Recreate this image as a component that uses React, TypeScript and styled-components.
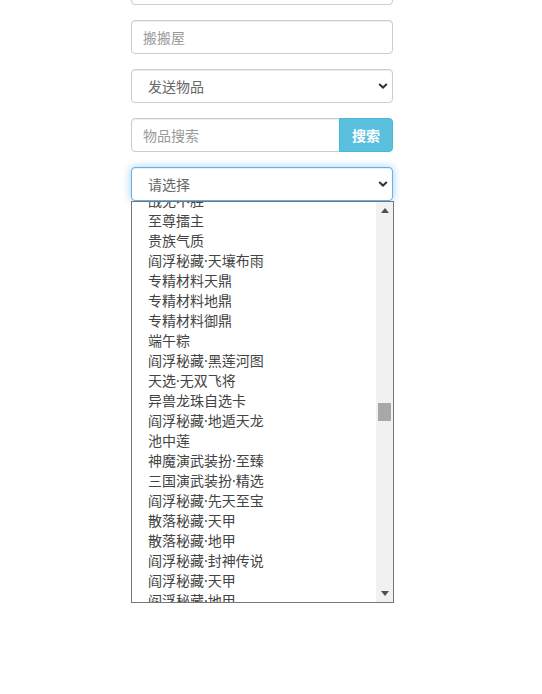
import React from "react";
import styled, { createGlobalStyle } from "styled-components";

const Global = createGlobalStyle`
  html, body { margin: 0; padding: 0; background: #fff; overflow: hidden; }
  body { font-family: "Noto Sans", "Noto Sans CJK SC", sans-serif; font-size: 14px; color: #333; }
  * { box-sizing: border-box; }
`;

const Page = styled.div`
  width: 542px;
  height: 694px;
  overflow: hidden;
`;

const Form = styled.div`
  width: 262px;
  margin-left: 131px;
  margin-top: -29px;
  display: flex;
  flex-direction: column;
  gap: 15px;
`;

const Input = styled.div<{ $placeholder?: boolean }>`
  height: 34px;
  border: 1px solid #ccc;
  border-radius: 4px;
  padding: 0 11px;
  display: flex;
  align-items: center;
  font-size: 14px;
  color: ${(p) => (p.$placeholder ? "#999" : "#555")};
  background: #fff;
  box-shadow: inset 0 1px 1px rgba(0, 0, 0, 0.075);
`;

const Select = styled.div<{ $focus?: boolean }>`
  height: 34px;
  border: 1px solid ${(p) => (p.$focus ? "#66afe9" : "#ccc")};
  border-radius: 4px;
  padding: 0 4px 0 16px;
  display: flex;
  align-items: center;
  justify-content: space-between;
  font-size: 14px;
  color: #666;
  background: #fff;
  box-shadow: ${(p) =>
    p.$focus
      ? "inset 0 1px 1px rgba(0,0,0,.075), 0 0 8px rgba(102,175,233,.6)"
      : "inset 0 1px 1px rgba(0,0,0,.075)"};
`;

const Group = styled.div`
  display: flex;
  height: 34px;
`;

const GroupInput = styled(Input)`
  flex: 1;
  border-radius: 4px 0 0 4px;
`;

const Button = styled.div`
  width: 54px;
  border: 1px solid #46b8da;
  background: #5bc0de;
  color: #fff;
  border-radius: 0 4px 4px 0;
  display: flex;
  align-items: center;
  justify-content: center;
  font-size: 14px;
  font-weight: 600;
  margin-left: -1px;
`;

const SelectWrap = styled.div`
  position: relative;
`;

const ListBox = styled.div`
  position: absolute;
  top: 34px;
  left: 0;
  width: 263px;
  height: 402px;
  border: 1px solid #767676;
  background: #fff;
  display: flex;
`;

const Options = styled.div`
  flex: 1;
  overflow: hidden;
`;

const OptionsInner = styled.div`
  margin-top: -11px;
`;

const Option = styled.div`
  height: 20px;
  line-height: 20px;
  padding-left: 16px;
  font-size: 14px;
  color: #444;
  white-space: nowrap;
`;

const ScrollBar = styled.div`
  width: 17px;
  background: #f1f1f1;
  position: relative;
  display: flex;
  flex-direction: column;
  align-items: center;
  justify-content: space-between;
`;

const Arrow = styled.div`
  height: 17px;
  width: 17px;
  display: flex;
  align-items: center;
  justify-content: center;
`;

const Thumb = styled.div`
  position: absolute;
  left: 2px;
  width: 13px;
  top: 201px;
  height: 18px;
  background: #a8a8a8;
`;

const items = [
  "战无不胜",
  "至尊擂主",
  "贵族气质",
  "阎浮秘藏·天壤布雨",
  "专精材料天鼎",
  "专精材料地鼎",
  "专精材料御鼎",
  "端午粽",
  "阎浮秘藏·黑莲河图",
  "天选·无双飞将",
  "异兽龙珠自选卡",
  "阎浮秘藏·地遁天龙",
  "池中莲",
  "神魔演武装扮·至臻",
  "三国演武装扮·精选",
  "阎浮秘藏·先天至宝",
  "散落秘藏·天甲",
  "散落秘藏·地甲",
  "阎浮秘藏·封神传说",
  "阎浮秘藏·天甲",
  "阎浮秘藏·地甲",
];

const Chevron = () => (
  <svg width="10" height="6" viewBox="0 0 10 6">
    <path d="M1.2 1 L5 4.6 L8.8 1" fill="none" stroke="#333" strokeWidth="2" />
  </svg>
);

export default function App() {
  return (
    <Page>
      <Global />
      <Form>
        <Input $placeholder />
        <Input $placeholder>搬搬屋</Input>
        <Select>
          <span>发送物品</span>
          <Chevron />
        </Select>
        <Group>
          <GroupInput $placeholder>物品搜索</GroupInput>
          <Button>搜索</Button>
        </Group>
        <SelectWrap>
          <Select $focus>
            <span>请选择</span>
            <Chevron />
          </Select>
          <ListBox>
            <Options>
              <OptionsInner>
                {items.map((t) => (
                  <Option key={t}>{t}</Option>
                ))}
              </OptionsInner>
            </Options>
            <ScrollBar>
              <Arrow>
                <svg width="8" height="5" viewBox="0 0 8 5">
                  <path d="M0 5 L4 0 L8 5 Z" fill="#505050" />
                </svg>
              </Arrow>
              <Thumb />
              <Arrow>
                <svg width="8" height="5" viewBox="0 0 8 5">
                  <path d="M0 0 L4 5 L8 0 Z" fill="#505050" />
                </svg>
              </Arrow>
            </ScrollBar>
          </ListBox>
        </SelectWrap>
      </Form>
    </Page>
  );
}
